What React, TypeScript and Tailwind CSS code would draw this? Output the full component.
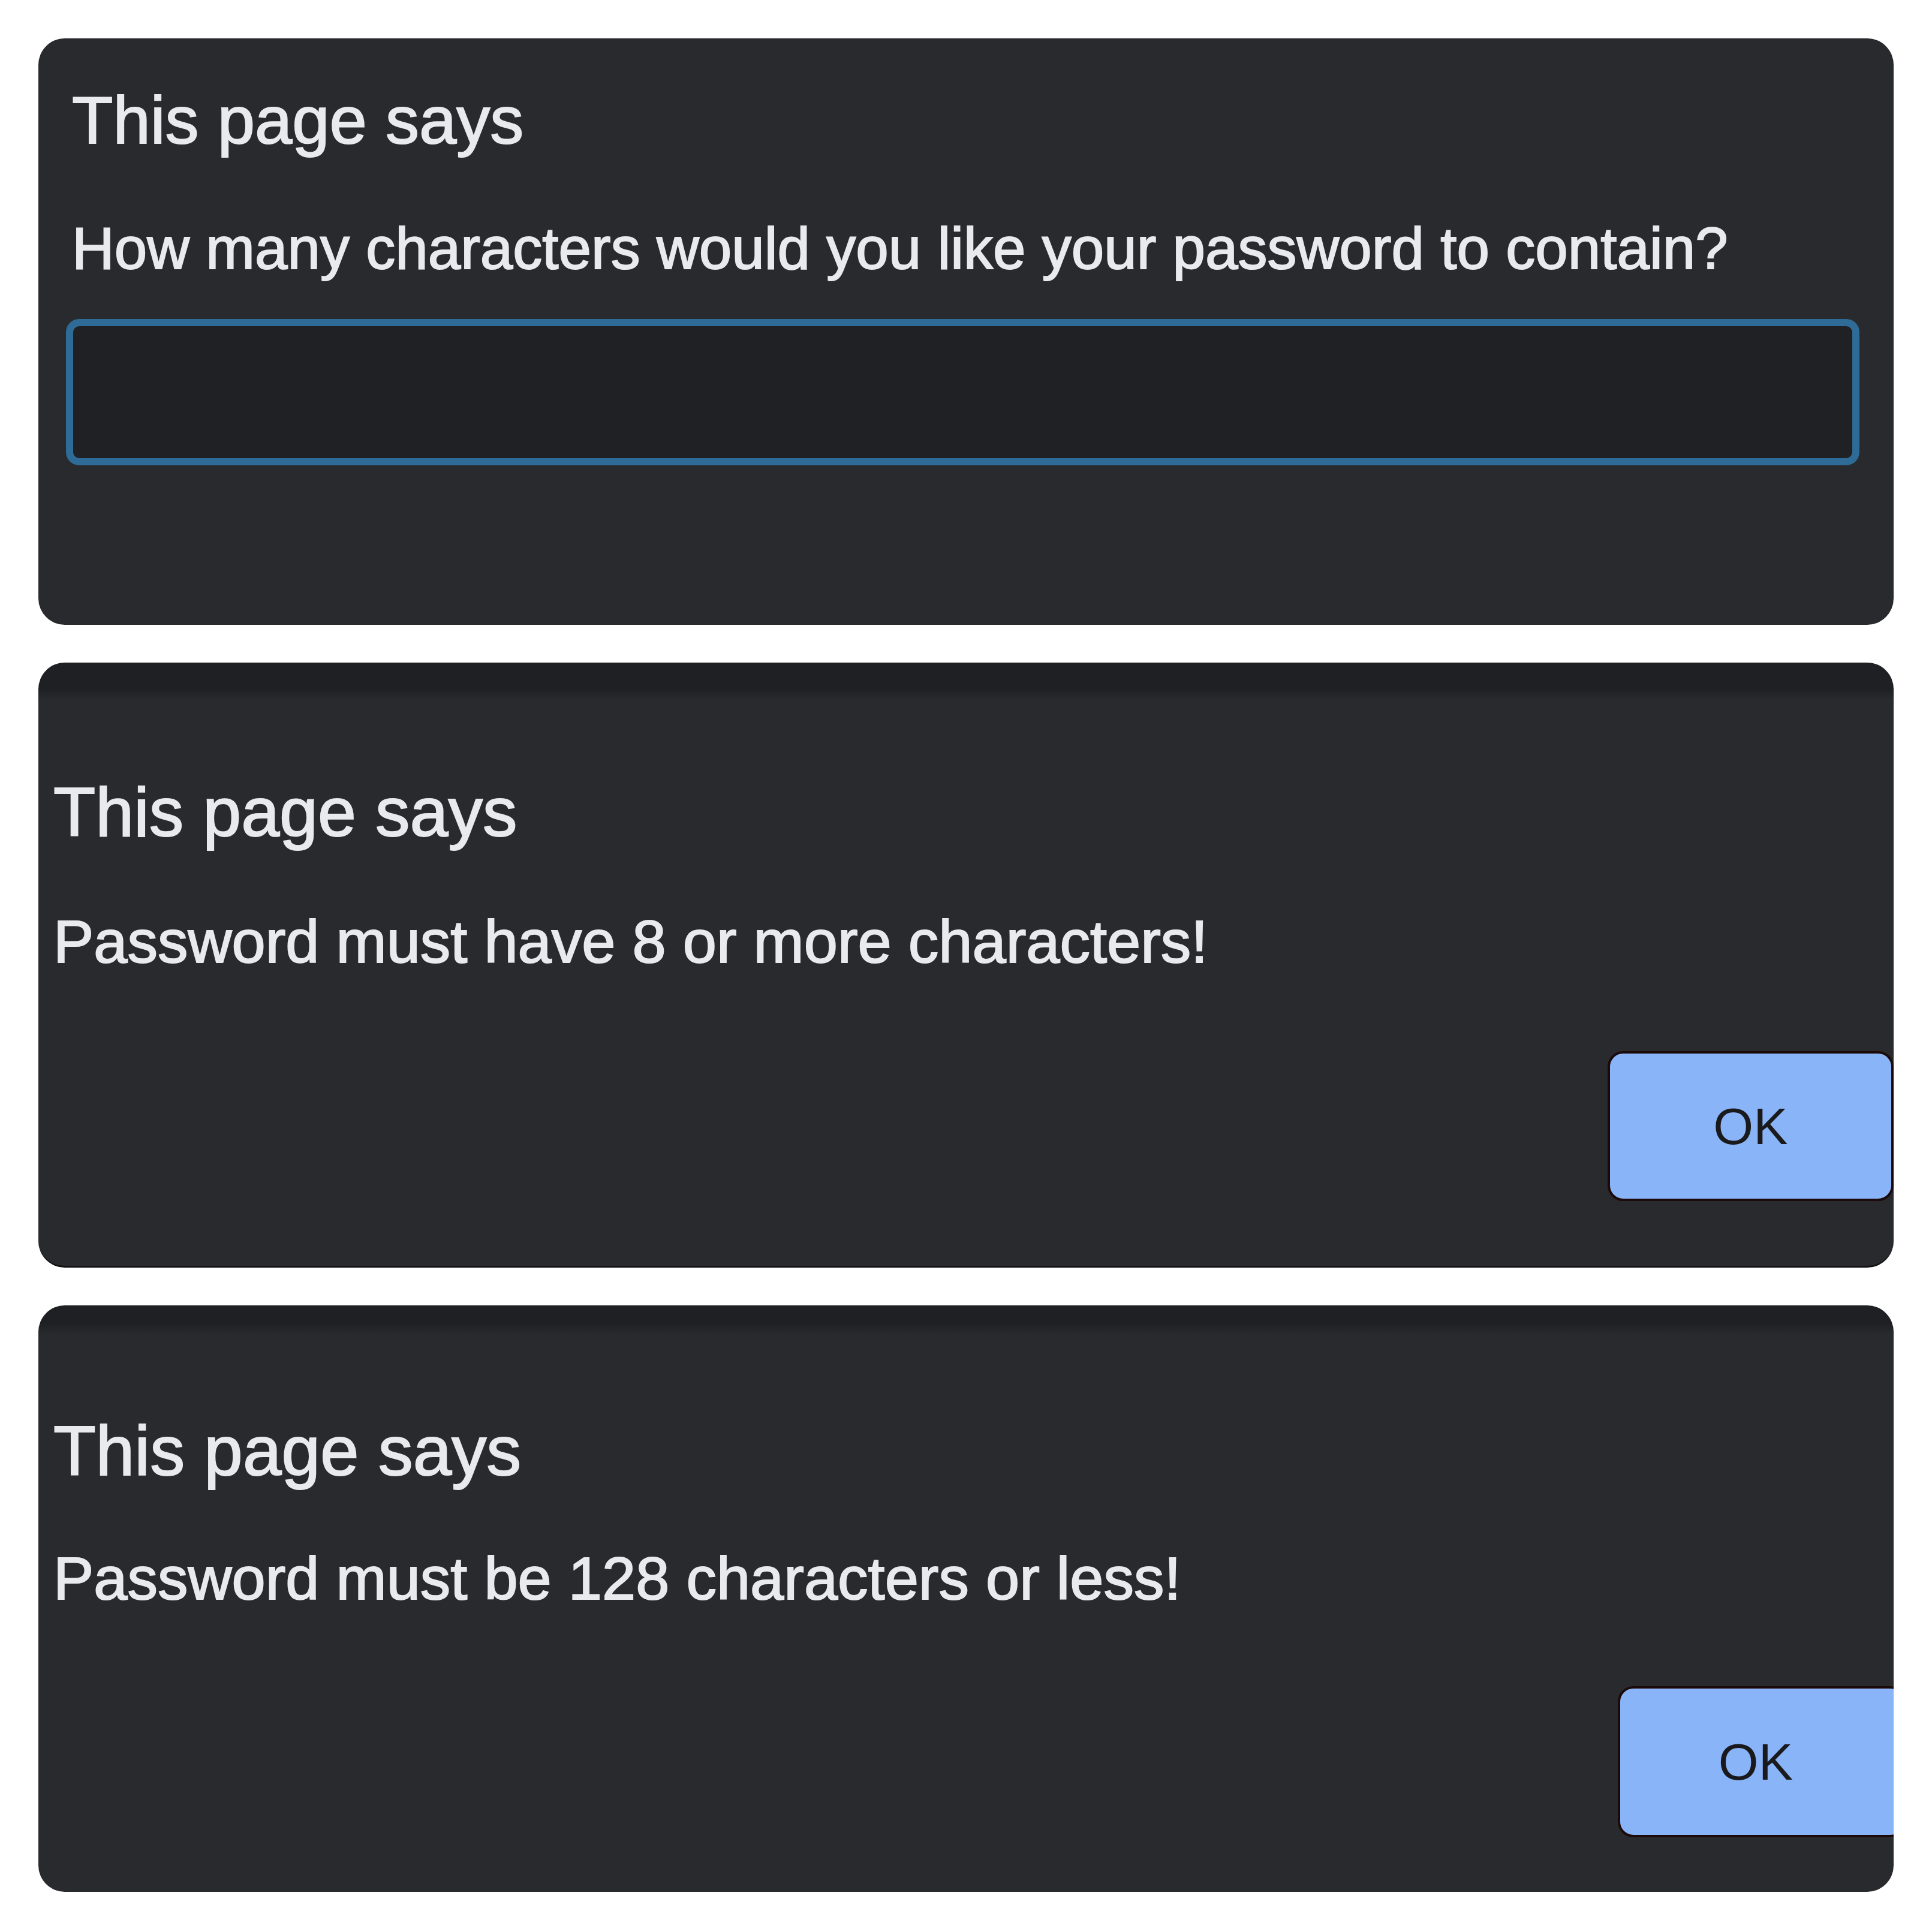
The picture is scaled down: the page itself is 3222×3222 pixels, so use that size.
export default function App() {
  return (
    <div className="w-[3222px] h-[3222px] bg-white flex flex-col gap-[63px] px-[64px] pt-[64px] font-['Liberation_Sans',Arial,sans-serif] text-[#e8eaed]">
      {/* prompt dialog */}
      <div className="h-[978px] shrink-0 rounded-[44px] bg-[#292a2d] pl-[56px] pr-[58px] pt-[81px] flex flex-col [-webkit-text-stroke:2px_#e8eaed]">
        <h2 className="text-[112px] leading-none">This page says</h2>
        <p className="mt-[108px] text-[98px] leading-none">
          How many characters would you like your password to contain?
        </p>
        <input
          type="text"
          className="mt-[69px] -ml-[10px] h-[244px] w-[2991px] rounded-[22px] border-[12px] border-[#2e6b96] bg-[#202124] outline-none"
        />
      </div>

      {/* alert: too short */}
      <div className="h-[1009px] shrink-0 rounded-[44px] overflow-hidden border-b-[3px] border-[#121214] bg-[linear-gradient(to_bottom,#1f2023_0px,#1f2023_44px,#292a2d_62px)] pl-[25px] pt-[192px] flex flex-col">
        <h2 className="text-[115px] leading-none [-webkit-text-stroke:2px_#e8eaed]">This page says</h2>
        <p className="mt-[108px] text-[101px] leading-none [-webkit-text-stroke:2px_#e8eaed]">
          Password must have 8 or more characters!
        </p>
        <div className="mt-[132px] flex justify-end">
          <button className="h-[250px] w-[477px] rounded-[26px] border-[4px] border-[#1c0a0a] bg-[#8ab4f8] text-[86px] leading-none text-[#1a1a1c]">
            OK
          </button>
        </div>
      </div>

      {/* alert: too long */}
      <div className="h-[978px] shrink-0 rounded-[44px] overflow-hidden bg-[linear-gradient(to_bottom,#1f2023_0px,#1f2023_30px,#292a2d_48px)] pl-[25px] pt-[185px] flex flex-col">
        <h2 className="text-[116px] leading-none [-webkit-text-stroke:2px_#e8eaed]">This page says</h2>
        <p className="mt-[104px] text-[101px] leading-none [-webkit-text-stroke:2px_#e8eaed]">
          Password must be 128 characters or less!
        </p>
        <div className="mt-[129px] flex justify-end">
          <button className="h-[252px] w-[480px] -mr-[20px] rounded-[26px] border-[4px] border-[#1c0a0a] bg-[#8ab4f8] text-[86px] leading-none text-[#1a1a1c] pr-[20px]">
            OK
          </button>
        </div>
      </div>
    </div>
  );
}
